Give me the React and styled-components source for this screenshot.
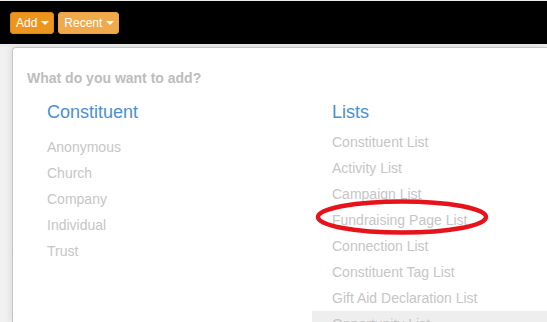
import React from "react";
import styled, { createGlobalStyle } from "styled-components";

const constituents = ["Anonymous", "Church", "Company", "Individual", "Trust"];
const lists = [
  "Constituent List",
  "Activity List",
  "Campaign List",
  "Fundraising Page List",
  "Connection List",
  "Constituent Tag List",
  "Gift Aid Declaration List",
  "Opportunity List",
];

export default function App() {
  return (
    <>
      <GlobalStyle />
      <Page>
        <TopBar>
          <MenuButton>
            Add <Caret />
          </MenuButton>
          <MenuButton $light>
            Recent <Caret />
          </MenuButton>
        </TopBar>

        <PanelWrap>
          <Panel>
            <Title>What do you want to add?</Title>
            <Columns>
              <Column>
                <Heading>Constituent</Heading>
                <ItemList $offset={12}>
                  {constituents.map((name) => (
                    <Item key={name}>{name}</Item>
                  ))}
                </ItemList>
              </Column>
              <Column>
                <Heading>Lists</Heading>
                <ItemList $offset={7}>
                  {lists.map((name) => (
                    <Item key={name} $hover={name === "Opportunity List"}>
                      {name}
                      {name === "Fundraising Page List" && (
                        <Circled width="176" height="40" viewBox="0 0 176 40">
                          <ellipse
                            cx="88"
                            cy="18"
                            rx="84"
                            ry="15.5"
                            fill="none"
                            stroke="#e8121a"
                            strokeWidth="4.5"
                          />
                        </Circled>
                      )}
                    </Item>
                  ))}
                </ItemList>
              </Column>
            </Columns>
          </Panel>
        </PanelWrap>
      </Page>
    </>
  );
}

const GlobalStyle = createGlobalStyle`
  html, body {
    margin: 0;
    padding: 0;
    background: #ececec;
    overflow: hidden;
  }
  * {
    box-sizing: border-box;
  }
`;

const Page = styled.div`
  height: 100vh;
  padding-top: 1px;
  background: #ececec;
  font-family: "Liberation Sans", Arial, sans-serif;
  display: flex;
  flex-direction: column;
`;

const TopBar = styled.header`
  flex-shrink: 0;
  height: 43px;
  background: #000;
  display: flex;
  align-items: flex-start;
  gap: 4px;
  padding: 11px 10px 0;
`;

const MenuButton = styled.button`
  height: 22px;
  display: flex;
  align-items: center;
  gap: 4px;
  padding: 0 4px 0 5px;
  border: 1px solid ${(p) => (p.$light ? "#e9a245" : "#d98617")};
  border-radius: 3px;
  background: ${(p) => (p.$light ? "#f0aa4c" : "#ec961f")};
  color: #fff;
  font-family: "Liberation Sans", Arial, sans-serif;
  font-size: 12px;
  line-height: 20px;
  cursor: pointer;
`;

const Caret = styled.span`
  width: 0;
  height: 0;
  border-left: 4px solid transparent;
  border-right: 4px solid transparent;
  border-top: 4px solid #fff;
`;

const PanelWrap = styled.div`
  flex: 1;
  min-height: 0;
  margin-top: 3px;
  padding-left: 12px;
  background: linear-gradient(to right, #f1f1f1, #e2e2e2);
`;

const Panel = styled.section`
  height: 100%;
  background: #fff;
  border: 1px solid #c6c6c6;
  border-right: none;
  border-bottom: none;
  border-radius: 4px 0 0 0;
  box-shadow: -2px 0 6px rgba(0, 0, 0, 0.08);
  padding: 20px 0 0 14px;
`;

const Title = styled.h2`
  margin: 0;
  font-size: 14px;
  line-height: 20px;
  font-weight: bold;
  color: #bdbdbd;
`;

const Columns = styled.div`
  display: grid;
  grid-template-columns: 285px 1fr;
  margin-top: 14px;
`;

const Column = styled.div`
  display: flex;
  flex-direction: column;
`;

const Heading = styled.h3`
  margin: 0;
  padding-left: 20px;
  font-size: 18px;
  line-height: 20px;
  font-weight: normal;
  color: #4a8fd5;
`;

const ItemList = styled.ul`
  list-style: none;
  margin: ${(p) => p.$offset}px 0 0;
  padding: 0;
`;

const Item = styled.li`
  position: relative;
  height: 26px;
  padding-left: 20px;
  font-size: 14px;
  line-height: 26px;
  color: #c6c6c6;
  white-space: nowrap;
  background: ${(p) => (p.$hover ? "#eeeeee" : "transparent")};
`;

const Circled = styled.svg`
  position: absolute;
  left: 2px;
  top: -8px;
  overflow: visible;
  pointer-events: none;
`;
